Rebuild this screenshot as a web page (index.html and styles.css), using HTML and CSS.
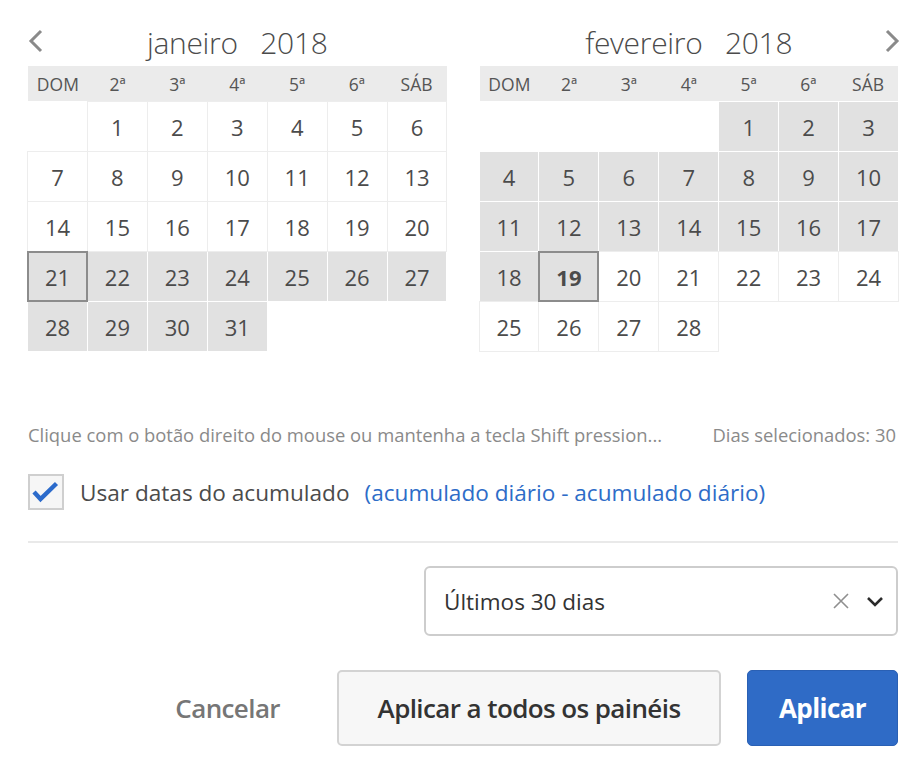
FILE: index.html
```html
<!DOCTYPE html>
<html lang="pt">
<head>
<meta charset="utf-8">
<title>Calendário</title>
<link rel="stylesheet" href="styles.css">
</head>
<body>
<div class="panel">
  <div class="cals">
    <div class="cal">
      <div class="cal-head">
        <button class="nav nav-prev" aria-label="Anterior">
          <svg width="16" height="24" viewBox="0 0 16 24"><path d="M13 2 L3 12 L13 22" fill="none" stroke="#8a8a8a" stroke-width="3"/></svg>
        </button>
        <div class="title">janeiro&nbsp;&nbsp; 2018</div>
        <span></span>
      </div>
      <div class="dow"><span>DOM</span><span>2ª</span><span>3ª</span><span>4ª</span><span>5ª</span><span>6ª</span><span>SÁB</span></div>
      <div class="grid">
        <span class="e"></span><span class="d">1</span><span class="d">2</span><span class="d">3</span><span class="d">4</span><span class="d">5</span><span class="d">6</span>
        <span class="d">7</span><span class="d">8</span><span class="d">9</span><span class="d">10</span><span class="d">11</span><span class="d">12</span><span class="d">13</span>
        <span class="d">14</span><span class="d">15</span><span class="d">16</span><span class="d">17</span><span class="d">18</span><span class="d">19</span><span class="d">20</span>
        <span class="d s t">21</span><span class="d s">22</span><span class="d s">23</span><span class="d s">24</span><span class="d s">25</span><span class="d s">26</span><span class="d s">27</span>
        <span class="d s">28</span><span class="d s">29</span><span class="d s">30</span><span class="d s">31</span><span class="e"></span><span class="e"></span><span class="e"></span>
      </div>
    </div>
    <div class="cal">
      <div class="cal-head">
        <span></span>
        <div class="title">fevereiro&nbsp;&nbsp; 2018</div>
        <button class="nav nav-next" aria-label="Próximo">
          <svg width="16" height="24" viewBox="0 0 16 24"><path d="M3 2 L13 12 L3 22" fill="none" stroke="#8a8a8a" stroke-width="3"/></svg>
        </button>
      </div>
      <div class="dow"><span>DOM</span><span>2ª</span><span>3ª</span><span>4ª</span><span>5ª</span><span>6ª</span><span>SÁB</span></div>
      <div class="grid">
        <span class="e"></span><span class="e"></span><span class="e"></span><span class="e"></span><span class="d s">1</span><span class="d s">2</span><span class="d s">3</span>
        <span class="d s">4</span><span class="d s">5</span><span class="d s">6</span><span class="d s">7</span><span class="d s">8</span><span class="d s">9</span><span class="d s">10</span>
        <span class="d s">11</span><span class="d s">12</span><span class="d s">13</span><span class="d s">14</span><span class="d s">15</span><span class="d s">16</span><span class="d s">17</span>
        <span class="d s">18</span><span class="d s t b">19</span><span class="d">20</span><span class="d">21</span><span class="d">22</span><span class="d">23</span><span class="d">24</span>
        <span class="d">25</span><span class="d">26</span><span class="d">27</span><span class="d">28</span><span class="e"></span><span class="e"></span><span class="e"></span>
      </div>
    </div>
  </div>

  <div class="info">
    <span class="hint">Clique com o botão direito do mouse ou mantenha a tecla Shift pression...</span>
    <span class="count">Dias selecionados: 30</span>
  </div>

  <label class="check-row">
    <span class="box">
      <svg width="36" height="36" viewBox="0 0 36 36"><path d="M6 18 L12.5 25 L28.5 9.5" fill="none" stroke="#2c6bcb" stroke-width="4.4" stroke-linejoin="miter"/></svg>
    </span>
    <span class="label">Usar datas do acumulado</span>
    <span class="link">(acumulado diário - acumulado diário)</span>
  </label>

  <div class="sep"></div>

  <div class="select-row">
    <div class="select">
      <span class="sel-text">Últimos 30 dias</span>
      <svg class="clear" width="18" height="18" viewBox="0 0 18 18"><path d="M2 2 L16 16 M16 2 L2 16" stroke="#8f8f8f" stroke-width="1.6" fill="none"/></svg>
      <svg class="chev" width="18" height="11" viewBox="0 0 18 11"><path d="M2 2 L9 9 L16 2" stroke="#2b2b2b" stroke-width="2.6" fill="none"/></svg>
    </div>
  </div>

  <div class="actions">
    <button class="btn btn-quiet">Cancelar</button>
    <button class="btn btn-secondary">Aplicar a todos os painéis</button>
    <button class="btn btn-primary">Aplicar</button>
  </div>
</div>
</body>
</html>
```

FILE: styles.css
```css
* { box-sizing: border-box; }

body {
  margin: 0;
  background: #fff;
  font-family: "Open Sans", "Noto Sans", sans-serif;
  color: #4b4b4b;
}

.panel {
  padding: 20px 24px 0 28px;
  width: 922px;
}

.cals {
  display: flex;
  gap: 33px;
}

.cal {
  flex: 1;
}

.cal-head {
  display: grid;
  grid-template-columns: 30px 1fr 30px;
  align-items: center;
  height: 46px;
}

.nav {
  background: none;
  border: 0;
  padding: 0;
  display: flex;
  align-items: center;
  height: 24px;
  margin-top: -4px;
  cursor: pointer;
}

.nav-next {
  justify-content: flex-end;
  margin-right: -2px;
}

.title {
  text-align: center;
  font-size: 30px;
  font-weight: 300;
  color: #4b4b4b;
  line-height: 46px;
  letter-spacing: -0.3px;
}

.dow {
  display: grid;
  grid-template-columns: repeat(7, 1fr);
  background: #ebebeb;
  height: 35px;
  align-items: center;
  margin-bottom: 1px;
}

.dow span {
  text-align: center;
  font-size: 17.5px;
  color: #555;
}

.grid {
  display: grid;
  grid-template-columns: repeat(7, 1fr);
  grid-auto-rows: 49px;
  gap: 1px;
}

.d {
  display: flex;
  align-items: center;
  justify-content: center;
  font-size: 22px;
  color: #4b4b4b;
  background: #fff;
  box-shadow: 0 0 0 1px #ededed;
}

.d.s {
  background: #e1e1e1;
  box-shadow: none;
}

.d.t {
  position: relative;
  z-index: 1;
  box-shadow: 0 0 0 1px #8c8c8c, inset 0 0 0 1px #8c8c8c;
}

.d.b {
  font-weight: 700;
}

.info {
  display: flex;
  justify-content: space-between;
  margin-top: 71px;
  font-size: 18.4px;
  line-height: 26px;
  color: #8a8a8a;
  padding-right: 2px;
}

.hint {
  white-space: nowrap;
}

.check-row {
  display: flex;
  align-items: center;
  margin-top: 26px;
  height: 36px;
  font-size: 22.6px;
}

.box {
  width: 36px;
  height: 36px;
  border: 2px solid #cfcfcf;
  background: #f6f6f6;
  display: flex;
  align-items: center;
  justify-content: center;
  margin-right: 16px;
}

.box svg {
  display: block;
  margin: -2px;
}

.label {
  color: #4b4b4b;
  margin-right: 15px;
}

.link {
  color: #2d6cc8;
}

.sep {
  height: 2px;
  background: #e9e9e9;
  margin-top: 31px;
}

.select-row {
  display: flex;
  justify-content: flex-end;
  margin-top: 23px;
}

.select {
  width: 474px;
  height: 70px;
  border: 2px solid #cdcdcd;
  border-radius: 6px;
  display: flex;
  align-items: center;
  padding: 0 12px 0 18px;
}

.sel-text {
  flex: 1;
  font-size: 22.5px;
  color: #333;
}

.clear {
  margin-right: 16px;
}

.actions {
  display: flex;
  justify-content: flex-end;
  align-items: center;
  gap: 26px;
  margin-top: 34px;
}

.btn {
  font-family: "Open Sans", "Noto Sans", sans-serif;
  font-size: 26px;
  font-weight: 600;
  height: 76px;
  border-radius: 5px;
  cursor: pointer;
  letter-spacing: -0.6px;
}

.btn-quiet {
  background: none;
  border: 0;
  color: #767676;
  padding: 0 31px 0 0;
}

.btn-secondary {
  width: 384px;
  background: #f7f7f7;
  border: 2px solid #d3d3d3;
  color: #333;
}

.btn-primary {
  width: 151px;
  background: #2f6bc6;
  border: 1px solid #2a60b4;
  color: #fff;
  font-weight: 700;
}
```
